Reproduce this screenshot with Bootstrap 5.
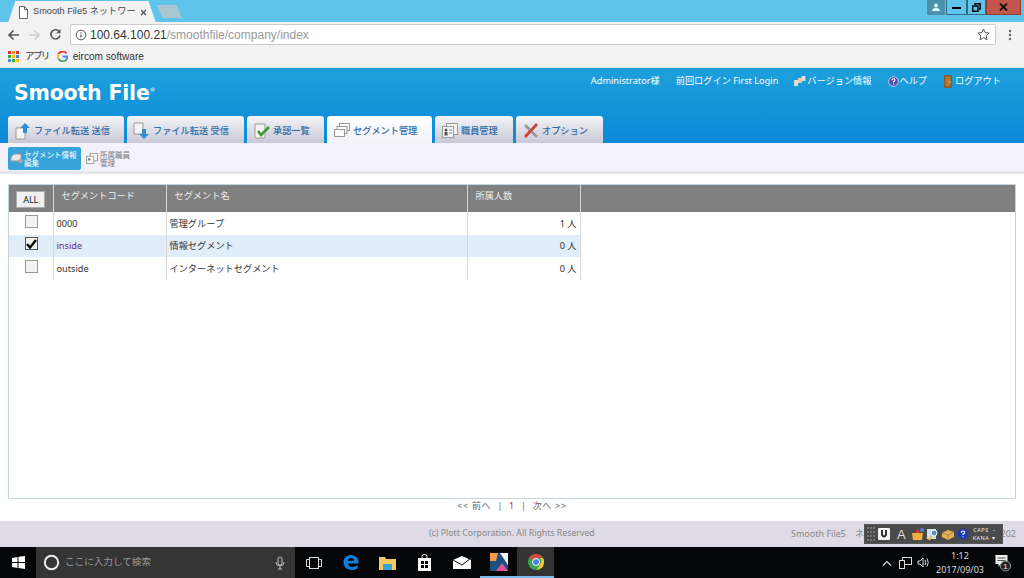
<!DOCTYPE html>
<html lang="ja">
<head>
<meta charset="utf-8">
<title>Smooth File5</title>
<link href="https://cdn.jsdelivr.net/npm/bootstrap@5.3.0/dist/css/bootstrap.min.css" rel="stylesheet">
<style>
html,body{height:578px;overflow:hidden}
body{width:1024px;font-family:"Noto Sans","Noto Sans CJK JP",sans-serif;font-size:9.2px;color:#444;background:#fff;display:flex;flex-direction:column}
svg{display:block;flex:none}
.tabstrip{height:22px;background:#5fc4ec;padding-left:8px;flex:none}
.br-tab{width:148px;height:22px;margin-top:1px;background:#f2f2f2;clip-path:polygon(0 100%,5% 0,95% 0,100% 100%);padding:0 12px 0 10px;font-size:9.2px;color:#444;font-family:"Liberation Sans","Noto Sans CJK JP",sans-serif}
.br-new{width:25px;height:13px;margin:5px 0 0 1px;background:#a9c6d3;clip-path:polygon(0 0,78% 0,100% 100%,22% 100%)}
.win-wrap{margin-right:3px}
.win-user{width:18px;height:15px;background:#4a90ab;margin-right:1px}
.win-btn{height:15px;border:1px solid #2f6a80;border-top:0;background:#5fc4ec}
.win-min{width:21px}
.win-max{width:19px}
.win-close{width:35px;background:#c4544c;border-color:#8c3a34}
.toolbar{height:24px;background:#f2f2f2;flex:none;padding:1px 0 0 7px}
.nav-gap{margin-left:8px}
.addr{width:926px;height:21px;background:#fff;border:1px solid #ccc;border-radius:2px;margin-left:8px;padding:0 4px;font-family:"Liberation Sans",sans-serif;font-size:12px;color:#999}
.addr b{font-weight:400;color:#333}
.addr-txt{margin-left:-1px}
.star{margin-right:1px}
.dots{margin-left:12px}
.bmarks{height:22px;background:#f2f2f2;flex:none;padding-left:8px;font-size:10.1px;color:#333;border-bottom:1px solid #ddd;font-family:"Liberation Sans","Noto Sans CJK JP",sans-serif}
.bm-app{margin-left:6px;font-size:9.5px;letter-spacing:-1.6px}
.bm-g{margin-left:8px}
.bm-e{margin-left:5px}
.app-head{height:75px;background:linear-gradient(#1ea0dc,#0a8ad8);flex:none;color:#fff;display:flex;flex-direction:column;justify-content:flex-end}
.head-top{flex:1;padding:6px 23px 0 14px}
.logo{font-family:"DejaVu Sans",sans-serif;font-weight:700;font-size:20.5px;letter-spacing:-.2px;line-height:1;margin-top:9px;white-space:nowrap}
.logo sup{font-size:6px;top:-1.3em;font-weight:400;margin-left:0;letter-spacing:0}
.usermenu{font-size:9.2px;line-height:14px;white-space:nowrap;gap:16px}
.um-item{gap:1px}
.main-tabs{padding-left:8px;height:27px;gap:3px}
.mtab{height:27px;border-radius:3px 3px 0 0;background:linear-gradient(#f4f4f8,#c9c8d6);color:#2f6ca8;font-size:9.2px;font-weight:500;padding:3px 0 0 6px;gap:2px;white-space:nowrap}
.mtab.on{background:#fff linear-gradient(#fff,#f3f1fb)}
.w-send{width:116px}.w-recv{width:117px}.w-appr{width:77px}.w-seg{width:105px}.w-staff{width:78px}.w-opt{width:87px}
.subnav{height:31px;background:#f3f1fb;border-bottom:3px solid #e6e5ec;flex:none;padding:4px 8px 0}
.sub-on{width:73px;height:23px;background:#38a3d9;border-radius:2px;color:#fff;font-size:7.5px;line-height:8px;padding-left:2px;gap:0}
.sub-off{height:23px;color:#777;font-size:7.5px;line-height:8px;padding-left:5px;gap:2px}
.sub-off svg{width:12px;height:11px}
.content{flex:1;padding:10px 8px 0;min-height:0}
.grid-box{height:315px;border:1px solid #c4d5df}
.seg-grid{border-collapse:collapse;table-layout:fixed;width:100%;font-size:9.2px}
.c1{width:44px}.c2{width:113px}.c3{width:301px}.c4{width:113px}
.seg-grid th{height:27px;background:#808080;color:#eee;font-weight:400;border-left:1px solid #d8d8d8;padding:0 0 5px 8px;vertical-align:middle}
.seg-grid th:first-child{border-left:0;padding:0;text-align:center}
.seg-grid td{height:22.5px;padding:1px 3px 0;border-left:1px solid #d8d8d8;color:#333}
.seg-grid td:first-child{border-left:0;padding:0 0 4px}
.seg-grid td.num{text-align:right}
.seg-grid tr.hl td:not(:last-child){background:#e1edf8}
.code{color:#4b3a6e}
.seg-grid td.code-v{color:#6a2a8e}
.all-btn{display:inline-block;width:29px;height:17px;line-height:16px;background:#f0f0f0;border:1px solid #aaa;color:#222;font-size:9px;margin-top:1px}
.cbx{width:13px;height:13px;border:1px solid #999;background:#f3f3f3;margin-left:16px}
.cbx-on{border-color:#555}
.pager{height:22px;font-size:9px;color:#666;line-height:14px;flex:none;letter-spacing:.7px}
.pager i{font-style:normal;color:#a33;margin:0 6px}
.app-foot{height:26px;background:#dedbe6;flex:none;font-size:9px;color:#888;position:relative;white-space:nowrap}
.foot-c{position:absolute;left:429px;top:6px;font-size:8.75px}
.foot-r{position:absolute;left:791px;top:6px}
.foot-v{position:absolute;right:8px;top:6px}
.ime{position:absolute;left:864px;top:3px;width:139px;height:20px;background:#4a4a4a;border:1px solid #555;color:#eee}
.grip{margin:0 3px 0 2px}
.ime-a{font-size:13px;line-height:1;font-family:"Liberation Sans",sans-serif;margin:0 5px 0 7px;color:#ddd}
.ime-i{margin-right:1px}
.ime-q{margin:0 4px 0 1px}
.ime-caps{font-size:5.5px;line-height:8px;letter-spacing:.5px;text-align:center}
.ime-arrow{margin-left:3px}
.taskbar{height:31px;background:#050608;flex:none;color:#ddd}
.start{width:36px}
.search{width:259px;height:31px;background:#353535;color:#999;font-size:9.6px;padding:0 10px 0 7px;gap:5px}
.tk{width:37px;height:31px}
.tk.act{background:#333}
.tk.run{border-bottom:2px solid #76b9ed}
.tray{padding-right:12px}
.t-net{margin-left:7px}
.t-vol{margin-left:5px}
.clock{font-size:9px;line-height:14px;text-align:center;width:58px;color:#ddd;margin-left:2px}
.notif{margin-left:5px;width:18px;height:18px}
</style>
</head>
<body>
<div class="tabstrip d-flex">
  <div class="br-tab d-flex align-items-center gap-1">
    <svg width="11" height="13" viewBox="0 0 11 13"><path d="M1.500.5h5l3 3v9h-8z M6.500.5v3h3" fill="#fff" stroke="#666"/></svg>
    <span class="flex-grow-1 text-nowrap">Smooth File5 ネットワー</span>
    <svg width="7" height="7" viewBox="0 0 7 7"><path d="M1 1l5 5M6 1l-5 5" stroke="#555" stroke-width="1.300"/></svg>
  </div>
  <div class="br-new"></div>
  <div class="ms-auto d-flex win-wrap">
    <div class="win-user d-flex justify-content-center align-items-center"><svg width="10" height="9" viewBox="0 0 10 9"><circle cx="5" cy="2.500" r="2" fill="#dff"/><path d="M1 8q0-3 4-3t4 3z" fill="#dff"/></svg></div>
    <div class="win-btn win-min d-flex justify-content-center align-items-center"><svg width="9" height="3" viewBox="0 0 9 3"><rect y="1" width="9" height="2"/></svg></div>
    <div class="win-btn win-max d-flex justify-content-center align-items-center"><svg width="9" height="9" viewBox="0 0 9 9"><path d="M3 2V.8h5.200V6H7M.8 3h5.200v5.200H.8z" fill="none" stroke="#000" stroke-width="1.400"/></svg></div>
    <div class="win-btn win-close d-flex justify-content-center align-items-center"><svg width="9" height="8" viewBox="0 0 9 8"><path d="M1 .5l7 7M8 .5l-7 7" stroke="#111" stroke-width="1.800"/></svg></div>
  </div>
</div>
<div class="toolbar d-flex align-items-center">
  <svg width="13" height="12" viewBox="0 0 13 12"><path d="M12 6H2M6.500 1.500L2 6l4.500 4.500" fill="none" stroke="#555" stroke-width="1.600"/></svg>
  <svg class="nav-gap" width="13" height="12" viewBox="0 0 13 12"><path d="M1 6h10M6.500 1.500L11 6l-4.500 4.500" fill="none" stroke="#ccc" stroke-width="1.600"/></svg>
  <svg class="nav-gap" width="13" height="13" viewBox="0 0 13 13"><path d="M10.500 4A4.600 4.600 0 1 0 11 7.500" fill="none" stroke="#555" stroke-width="1.600"/><path d="M11.500 1v4.200h-4.200z" fill="#555"/></svg>
  <div class="addr d-flex align-items-center gap-1">
    <svg width="12" height="12" viewBox="0 0 12 12"><circle cx="6" cy="6" r="4.800" fill="none" stroke="#555"/><path d="M6 5.500v3M6 3.200v1.200" stroke="#555" stroke-width="1.200"/></svg>
    <span class="flex-grow-1 addr-txt"><b>100.64.100.21</b>/smoothfile/company/index</span>
    <svg class="star" width="13" height="13" viewBox="0 0 13 13"><path d="M6.500 1l1.700 3.600 3.900.5-2.900 2.700.8 3.900-3.500-2-3.500 2 .8-3.900L.9 5.100l3.900-.5z" fill="none" stroke="#555"/></svg>
  </div>
  <svg class="dots" width="4" height="12" viewBox="0 0 4 12"><circle cx="2" cy="2" r="1.200" fill="#666"/><circle cx="2" cy="6" r="1.200" fill="#666"/><circle cx="2" cy="10" r="1.200" fill="#666"/></svg>
</div>
<div class="bmarks d-flex align-items-center">
  <svg width="11" height="11" viewBox="0 0 11 11"><rect width="3" height="3" fill="#d33"/><rect x="4" width="3" height="3" fill="#e83"/><rect x="8" width="3" height="3" fill="#d33"/><rect y="4" width="3" height="3" fill="#3a3"/><rect x="4" y="4" width="3" height="3" fill="#fb0"/><rect x="8" y="4" width="3" height="3" fill="#48d"/><rect y="8" width="3" height="3" fill="#48d"/><rect x="4" y="8" width="3" height="3" fill="#3a3"/><rect x="8" y="8" width="3" height="3" fill="#fb0"/></svg>
  <span class="bm-app">アプリ</span>
  <svg class="bm-g" width="11" height="11" viewBox="0 0 11 11"><path d="M9.500 2.300A5 5 0 0 0 1.300 3.200" fill="none" stroke="#e33" stroke-width="1.800"/><path d="M1.300 3.200a5 5 0 0 0 0 4.500" fill="none" stroke="#fb0" stroke-width="1.800"/><path d="M1.300 7.700a5 5 0 0 0 7.500 1.600" fill="none" stroke="#3a5" stroke-width="1.800"/><path d="M8.800 9.300Q10.300 7.800 10.300 5.500H5.600" fill="none" stroke="#48e" stroke-width="1.800"/></svg>
  <span class="bm-e">eircom software</span>
</div>
<header class="app-head">
  <div class="head-top d-flex justify-content-between">
    <div class="logo">Smooth File<sup>®</sup></div>
    <div class="usermenu d-flex align-items-start">
      <span>Administrator様</span>
      <span>前回ログイン First Login</span>
      <span class="um-item d-flex align-items-center">
        <svg width="12" height="12" viewBox="0 0 12 12"><rect x="0" y="5" width="4" height="6" fill="#ddd"/><rect x="4" y="3" width="4" height="5" fill="#f2c9a0"/><rect x="7.500" y="1" width="4" height="5" fill="#ddd"/></svg>バージョン情報</span>
      <span class="um-item d-flex align-items-center">
        <svg width="11" height="11" viewBox="0 0 11 11"><circle cx="5.500" cy="5.500" r="4.800" fill="#4d4fb0" stroke="#ccd"/><path d="M4 4.300q0-1.500 1.500-1.500t1.500 1.400q0 .8-1.500 1.600v.6M5.500 7.500v1" fill="none" stroke="#fff" stroke-width="1.100"/></svg>ヘルプ</span>
      <span class="um-item d-flex align-items-center">
        <svg width="11" height="13" viewBox="0 0 11 13"><rect x="1" y="0" width="8" height="13" fill="#8a5a2a"/><rect x="2.500" y="1.500" width="5" height="10" fill="#b5763a"/><circle cx="7" cy="7" r=".8" fill="#fd6"/></svg>ログアウト</span>
    </div>
  </div>
  <nav class="main-tabs d-flex">
    <div class="mtab w-send d-flex align-items-center"><svg width="18" height="18" viewBox="0 0 18 18"><path d="M2 6h9v11H2z" fill="#f5f5f5" stroke="#999"/><path d="M11 1l5 5h-3v5H9V6H6z" fill="#2f8fd0"/></svg>ファイル転送 送信</div>
    <div class="mtab w-recv d-flex align-items-center"><svg width="18" height="18" viewBox="0 0 18 18"><path d="M1 1h9v11H1z" fill="#f5f5f5" stroke="#999"/><path d="M11 17l5-5h-3V7H9v5H6z" fill="#2f8fd0"/></svg>ファイル転送 受信</div>
    <div class="mtab w-appr d-flex align-items-center"><svg width="18" height="18" viewBox="0 0 18 18"><path d="M2 2h10v14H2z" fill="#f5f5f5" stroke="#999"/><path d="M5 9l3 4 8-8" fill="none" stroke="#3a9a30" stroke-width="2.600"/></svg>承認一覧</div>
    <div class="mtab on w-seg d-flex align-items-center"><svg width="18" height="18" viewBox="0 0 18 18"><g fill="#fafafa" stroke="#999"><rect x="6.500" y="1.500" width="10" height="7"/><rect x="4" y="4.500" width="10" height="7"/><rect x="1.500" y="7.500" width="10" height="7"/></g></svg>セグメント管理</div>
    <div class="mtab w-staff d-flex align-items-center"><svg width="18" height="18" viewBox="0 0 18 18"><rect x="5.500" y="1.500" width="11" height="11" fill="#f5f5f5" stroke="#999"/><rect x="1.500" y="4.500" width="11" height="11" fill="#f5f5f5" stroke="#999"/><circle cx="5" cy="8" r="1.500" fill="#555"/><rect x="3.500" y="10" width="3" height="3.500" fill="#555"/><path d="M8 8h3M8 11h3" stroke="#888"/></svg>職員管理</div>
    <div class="mtab w-opt d-flex align-items-center"><svg width="18" height="18" viewBox="0 0 18 18"><path d="M3 3l12 12" stroke="#999" stroke-width="2.600"/><path d="M15 2L3 15" stroke="#c8443a" stroke-width="2.800"/></svg>オプション</div>
  </nav>
</header>
<div class="subnav d-flex">
  <div class="sub-on d-flex align-items-center"><svg width="14" height="11" viewBox="0 0 14 11"><path d="M1 4l3-3h7v7H1z" fill="#e8e8e8" stroke="#999"/><circle cx="10.500" cy="8" r="2.300" fill="#aaa"/></svg><span>セグメント情報<br>編集</span></div>
  <div class="sub-off d-flex align-items-center"><svg viewBox="0 0 13 12"><rect x="4.500" y=".5" width="8" height="8" fill="#fafafa" stroke="#999"/><rect x=".5" y="3.500" width="8" height="8" fill="#fafafa" stroke="#999"/><circle cx="3.500" cy="7" r="1.300" fill="#666"/></svg><span>所属職員<br>管理</span></div>
</div>
<main class="content">
  <div class="grid-box">
    <table class="seg-grid">
      <colgroup><col class="c1"><col class="c2"><col class="c3"><col class="c4"><col></colgroup>
      <thead><tr><th><span class="all-btn">ALL</span></th><th>セグメントコード</th><th>セグメント名</th><th>所属人数</th><th></th></tr></thead>
      <tbody>
        <tr><td><div class="cbx"></div></td><td class="code">0000</td><td>管理グループ</td><td class="num">1 人</td><td></td></tr>
        <tr class="hl"><td><div class="cbx cbx-on d-flex align-items-center justify-content-center"><svg width="11" height="10" viewBox="0 0 11 10"><path d="M1 5l3 3.500L10 1" fill="none" stroke="#000" stroke-width="2.400"/></svg></div></td><td class="code code-v">inside</td><td>情報セグメント</td><td class="num">0 人</td><td></td></tr>
        <tr><td><div class="cbx"></div></td><td class="code">outside</td><td>インターネットセグメント</td><td class="num">0 人</td><td></td></tr>
      </tbody>
    </table>
  </div>
  <div class="pager text-center">&lt;&lt; 前へ &nbsp;|<i>1</i>|&nbsp; 次へ &gt;&gt;</div>
</main>
<footer class="app-foot">
  <span class="foot-c">(c) Plott Corporation. All Rights Reserved</span>
  <span class="foot-r">Smooth File5　ネ</span>
  <span class="foot-v">202</span>
  <div class="ime d-flex align-items-center">
    <svg class="grip" width="8" height="14" viewBox="0 0 8 14"><g fill="#777"><rect width="2" height="2"/><rect x="3" width="2" height="2"/><rect x="6" width="2" height="2"/><rect y="4" width="2" height="2"/><rect x="3" y="4" width="2" height="2"/><rect x="6" y="4" width="2" height="2"/><rect y="8" width="2" height="2"/><rect x="3" y="8" width="2" height="2"/><rect x="6" y="8" width="2" height="2"/><rect y="12" width="2" height="2"/><rect x="3" y="12" width="2" height="2"/><rect x="6" y="12" width="2" height="2"/></g></svg>
    <svg width="12" height="12" viewBox="0 0 12 12"><rect width="12" height="12" rx="1" fill="#f4f4f4"/><path d="M4 2v5q2 3 4 0V2" fill="none" stroke="#222" stroke-width="1.800"/></svg>
    <span class="ime-a">A</span>
    <svg class="ime-i" width="14" height="14" viewBox="0 0 14 14"><path d="M1 6h11l-1 7H2z" fill="#f0b040"/><path d="M4 6l3-5 2 5" fill="#c34"/><circle cx="11" cy="3" r="2" fill="#48d"/></svg>
    <svg class="ime-i" width="14" height="14" viewBox="0 0 14 14"><rect x="1" y="2" width="9" height="10" fill="#cde"/><circle cx="8" cy="6" r="3" fill="#59c" stroke="#fff"/><path d="M6 9l-3 4" stroke="#fb3" stroke-width="2"/></svg>
    <svg class="ime-i" width="14" height="14" viewBox="0 0 14 14"><path d="M1 6l6-3 6 2v5l-6 3-6-3z" fill="#eab050"/><path d="M7 7v6M1 6l6 2 6-3" stroke="#a86" fill="none"/></svg>
    <svg class="ime-q" width="12" height="12" viewBox="0 0 14 14"><circle cx="7" cy="7" r="6.500" fill="#1a3fb0"/><path d="M5 5.500q0-2 2-2t2 1.800q0 1-2 2v1M7 9.500v1.300" fill="none" stroke="#fff" stroke-width="1.300"/></svg>
    <div class="ime-caps">CAPS<br>KANA</div>
    <div class="ime-caps ime-arrow">–<br>▾</div>
  </div>
</footer>
<div class="taskbar d-flex align-items-center">
  <div class="start d-flex justify-content-center"><svg width="13" height="13" viewBox="0 0 13 13"><path d="M0 2l5.500-1v5H0zM6.500.8L13 0v6H6.500zM0 7h5.500v5L0 11zM6.500 7H13v6l-6.500-.9z" fill="#fff"/></svg></div>
  <div class="search d-flex align-items-center">
    <svg width="17" height="17" viewBox="0 0 17 17"><circle cx="8.500" cy="8.500" r="6.700" fill="none" stroke="#eee" stroke-width="2"/></svg>
    <span class="flex-grow-1">ここに入力して検索</span>
    <svg width="10" height="14" viewBox="0 0 10 14"><rect x="3" y="1" width="4" height="8" rx="2" fill="none" stroke="#bbb"/><path d="M1 6q0 4 4 4t4-4M5 10v3M3 13h4" fill="none" stroke="#bbb"/></svg>
  </div>
  <div class="tk d-flex justify-content-center align-items-center"><svg width="16" height="12" viewBox="0 0 16 12"><rect x="3.500" y=".5" width="9" height="11" fill="none" stroke="#ddd"/><path d="M3 2.500H.5v7H3M13 2.500h2.500v7H13" fill="none" stroke="#ddd"/></svg></div>
  <div class="tk d-flex justify-content-center align-items-center"><svg width="16" height="17" viewBox="0 0 16 17"><path d="M8 1a7.500 7.500 0 0 1 7.500 8.500H5q.5 3.500 4 3.500 3.500 0 5.500-2v3.500q-2 1.500-5.500 1.500-8 0-8.500-8C.5 3 5 1 8 1zM5 6.800h6Q11 4 8 4T5 6.800z" fill="#0f7fd8"/></svg></div>
  <div class="tk d-flex justify-content-center align-items-center"><svg width="17" height="14" viewBox="0 0 17 14"><path d="M0 1h6l1 2h10v11H0z" fill="#f2c95c"/><rect x="4" y="8" width="9" height="6" fill="#39a0d8"/></svg></div>
  <div class="tk d-flex justify-content-center align-items-center"><svg width="15" height="17" viewBox="0 0 15 17"><path d="M5 4V2.500q0-2 2.500-2t2.500 2V4" fill="none" stroke="#fff"/><path d="M1 4h13v13H1z" fill="#fff"/><path d="M4 7h3v3H4zM8 7h3v3H8zM4 11h3v3H4zM8 11h3v3H8z" fill="#050608"/></svg></div>
  <div class="tk d-flex justify-content-center align-items-center"><svg width="18" height="13" viewBox="0 0 18 13"><path d="M0 4L9 0l9 4v9H0z" fill="#fff"/><path d="M0 4l9 5 9-7" fill="none" stroke="#050608"/></svg></div>
  <div class="tk run d-flex justify-content-center align-items-center"><svg width="18" height="18" viewBox="0 0 18 18"><rect width="18" height="18" fill="#1c4f7e"/><path d="M0 0h8l-2 8H0z" fill="#f09a4a"/><path d="M10 0h8v12z" fill="#f2f2f2"/><path d="M6 18l6-8 6 8z" fill="#e0509a"/></svg></div>
  <div class="tk act run d-flex justify-content-center align-items-center"><svg width="18" height="18" viewBox="0 0 18 18"><circle cx="9" cy="9" r="8" fill="#3aa655"/><path d="M9 1a8 8 0 0 1 7 4H9a4 4 0 0 0-4 3L2.500 4.500A8 8 0 0 1 9 1z" fill="#d9453a"/><path d="M16 5a8 8 0 0 1-6 12l3-6a4 4 0 0 0 0-6z" fill="#f7c52e"/><circle cx="9" cy="9" r="3.500" fill="#4a7fe0" stroke="#fff"/></svg></div>
  <div class="tray ms-auto d-flex align-items-center">
    <svg width="10" height="6" viewBox="0 0 10 6"><path d="M1 5.500l4-4 4 4" fill="none" stroke="#ddd" stroke-width="1.200"/></svg>
    <svg class="t-net" width="13" height="12" viewBox="0 0 13 12"><rect x="3.500" y=".5" width="9" height="7" fill="none" stroke="#ddd"/><rect x=".5" y="3.500" width="5" height="8" fill="#050608" stroke="#ddd"/></svg>
    <svg class="t-vol" width="12" height="11" viewBox="0 0 12 11"><path d="M1 4h2l3-3v9L3 7H1z" fill="none" stroke="#ddd"/><path d="M8 3q1.500 2.500 0 5M10 1.500q2.500 4 0 8" fill="none" stroke="#ddd"/></svg>
    <div class="clock">1:12<br>2017/09/03</div>
    <div class="notif"><svg width="18" height="18" viewBox="0 0 17 18"><path d="M1 1h12v9H6l-2 3v-3H1z" fill="#eee"/><path d="M3 4h8M3 6.500h8" stroke="#555"/><circle cx="11" cy="12" r="5" fill="#222" stroke="#999"/><text x="11" y="15" fill="#eee" font-size="8" text-anchor="middle" font-family="Liberation Sans">1</text></svg></div>
  </div>
</div>
<script src="https://cdn.jsdelivr.net/npm/bootstrap@5.3.0/dist/js/bootstrap.bundle.min.js"></script>
</body>
</html>
